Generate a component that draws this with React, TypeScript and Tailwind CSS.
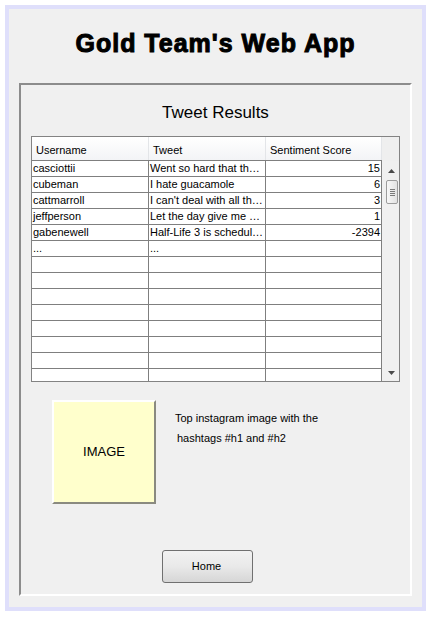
import React from "react";

const rows: [string, string, string][] = [
  ["casciottii", "Went so hard that th…", "15"],
  ["cubeman", "I hate guacamole", "6"],
  ["cattmarroll", "I can't deal with all th…", "3"],
  ["jeffperson", "Let the day give me …", "1"],
  ["gabenewell", "Half-Life 3 is schedul…", "-2394"],
  ["...", "...", ""],
];

const allRows: [string, string, string][] = [
  ...rows,
  ...Array.from({ length: 8 }, () => ["", "", ""] as [string, string, string]),
];

function UpArrow() {
  return (
    <svg width="7" height="4" viewBox="0 0 7 4">
      <path d="M0 4 L3.5 0 L7 4 Z" fill="#4a4a4a" />
    </svg>
  );
}

function DownArrow() {
  return (
    <svg width="7" height="4" viewBox="0 0 7 4">
      <path d="M0 0 L7 0 L3.5 4 Z" fill="#4a4a4a" />
    </svg>
  );
}

export default function App() {
  return (
    <div className="w-[431px] h-[617px] bg-white p-[5px] font-['Liberation_Sans',Arial,sans-serif] text-black">
      <div className="w-[421px] h-[606px] border-4 border-[#dfdffb] bg-[#f0f0f0] flex flex-col">
        <div className="pt-[19px] h-[30px] box-content text-center text-[25px] leading-[30px] font-bold tracking-[1px] [-webkit-text-stroke:1px_black]">
          Gold Team's Web App
        </div>
        <div className="mt-[25px] ml-[10px] w-[393px] h-[513px] border-2 border-t-[#8c8c8c] border-l-[#8c8c8c] border-r-white border-b-white flex flex-col">
          <div className="mt-[18px] h-[20px] leading-[20px] text-[17px] text-center">
            Tweet Results
          </div>
          <div className="mt-[13px] ml-[10px] w-[369px] h-[246px] border border-[#838383] bg-white flex">
            <div className="w-[350px] flex flex-col">
              <div className="h-[24px] border-b border-[#7f7f7f] flex bg-gradient-to-b from-white to-[#f3f4f6] text-[11px]">
                <div className="w-[117px] border-r border-[#e3e5e8] pl-[4px] pt-[4px] flex items-center">Username</div>
                <div className="w-[117px] border-r border-[#e3e5e8] pl-[4px] pt-[4px] flex items-center">Tweet</div>
                <div className="w-[116px] border-r border-[#e3e5e8] pl-[4px] pt-[4px] flex items-center">Sentiment Score</div>
              </div>
              <div className="h-[220px] overflow-hidden flex flex-col">
                {allRows.map((r, i) => (
                  <div key={i} className="h-[16px] shrink-0 border-b border-[#7f7f7f] flex text-[11px] leading-[15px]">
                    <div className="w-[117px] border-r border-[#7f7f7f] pl-[1px] whitespace-nowrap overflow-hidden">{r[0]}</div>
                    <div className="w-[117px] border-r border-[#7f7f7f] pl-[1px] whitespace-nowrap overflow-hidden">{r[1]}</div>
                    <div className="w-[116px] border-r border-[#7f7f7f] pr-[1px] text-right whitespace-nowrap overflow-hidden">{r[2]}</div>
                  </div>
                ))}
              </div>
            </div>
            <div className="w-[17px] flex flex-col bg-[#f0f0f0]">
              <div className="h-[24px] bg-[#efefef]" />
              <div className="h-[19px] flex items-center justify-center pl-[1px] pt-[1px]">
                <UpArrow />
              </div>
              <div className="ml-[4px] w-[12px] h-[24px] rounded-[2px] border border-[#9c9c9c] bg-gradient-to-r from-[#f8f8f8] to-[#e2e2e2] flex flex-col items-center justify-center gap-[1px]">
                <div className="w-[5px] h-[1px] bg-[#7a7a7a]" />
                <div className="w-[5px] h-[1px] bg-[#7a7a7a]" />
                <div className="w-[5px] h-[1px] bg-[#7a7a7a]" />
                <div className="w-[5px] h-[1px] bg-[#7a7a7a]" />
              </div>
              <div className="flex-1" />
              <div className="h-[17px] flex items-center justify-center pl-[2px]">
                <DownArrow />
              </div>
            </div>
          </div>
          <div className="mt-[18px] ml-[31px] flex">
            <div className="w-[104px] h-[104px] bg-[#ffffcc] border-2 border-t-white border-l-white border-r-[#8a8a80] border-b-[#8a8a80] flex items-center justify-center text-[13px]">
              IMAGE
            </div>
            <div className="ml-[19px] mt-[8px] text-[11px] leading-[20px]">
              <div>Top instagram image with the</div>
              <div className="pl-[2px]">hashtags #h1 and #h2</div>
            </div>
          </div>
          <div className="mt-[46px] ml-[141px] w-[91px] h-[33px] rounded-[3px] border border-[#707070] bg-gradient-to-b from-[#f2f2f2] via-[#e9e9e9] to-[#d6d6d6] flex items-center justify-center text-[11px] pr-[2px]">
            Home
          </div>
        </div>
      </div>
    </div>
  );
}
